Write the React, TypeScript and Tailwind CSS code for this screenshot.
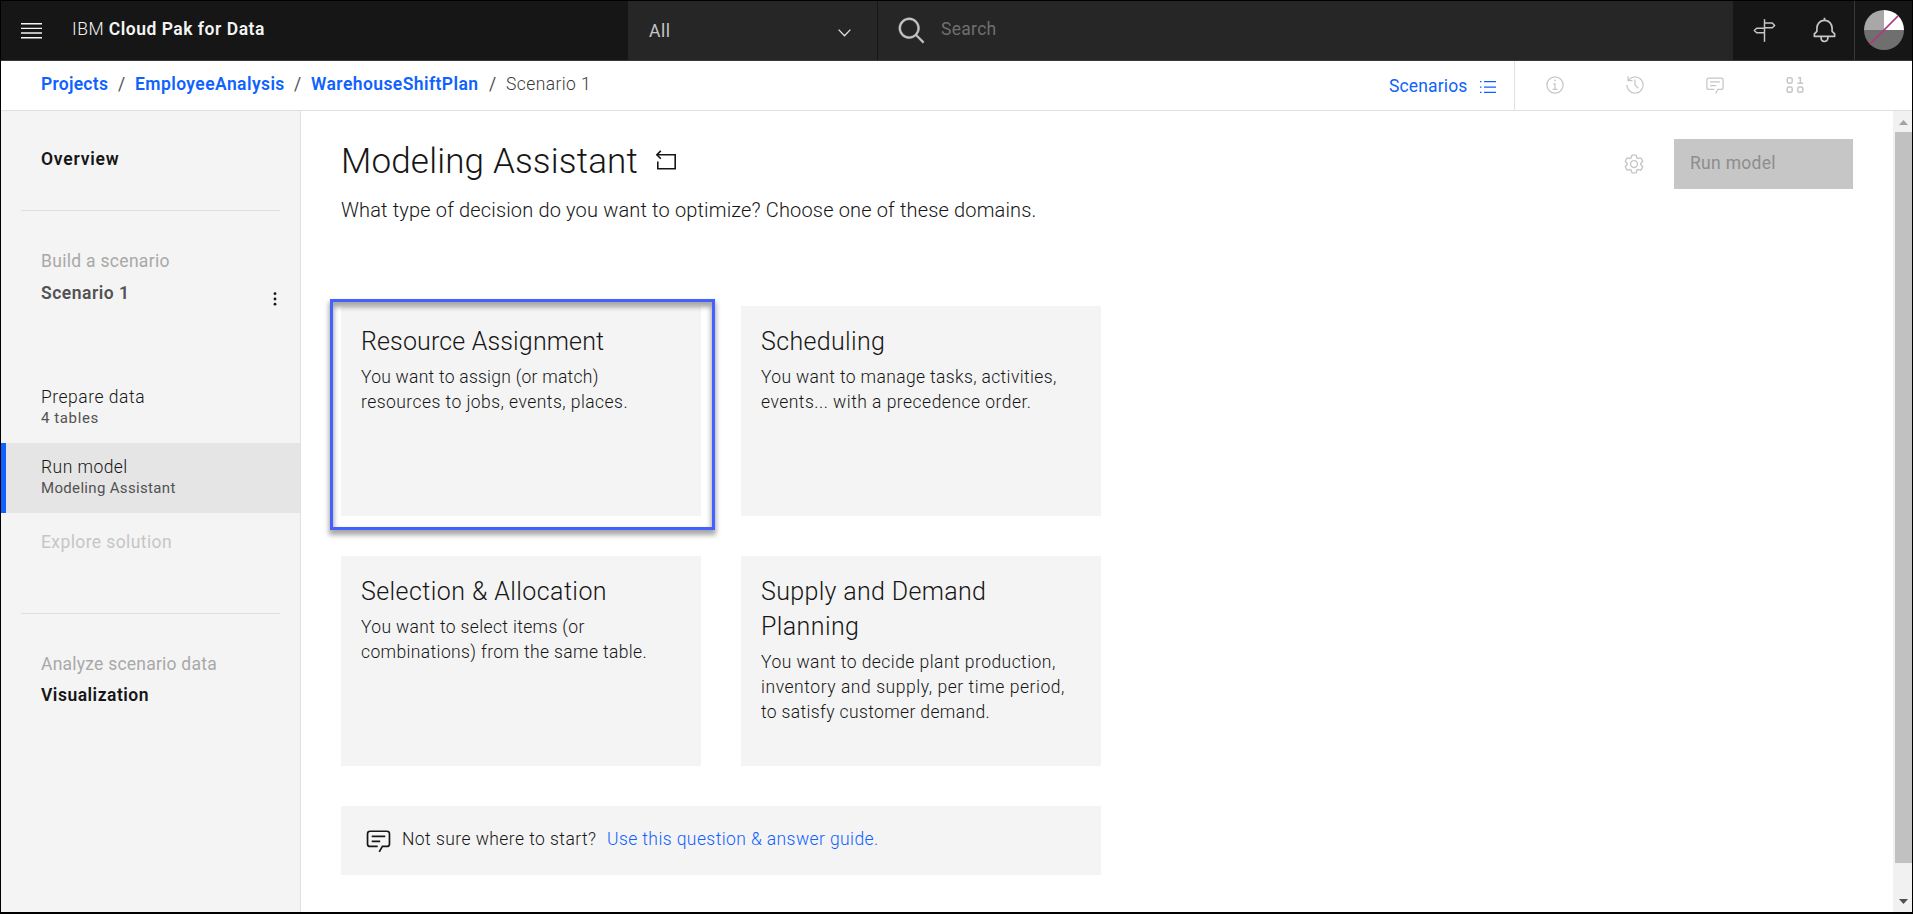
import React from "react";
import type { ReactNode } from "react";

type IconProps = { className?: string; children: ReactNode; box?: number };

function Icon({ className = "", children, box = 32 }: IconProps) {
  return (
    <svg viewBox={`0 0 ${box} ${box}`} fill="currentColor" className={`block shrink-0 ${className}`} aria-hidden="true">
      {children}
    </svg>
  );
}

const SearchIcon = ({ className }: { className: string }) => (
  <Icon className={className}>
    <path d="M29,27.5859l-7.5521-7.5521a11.0177,11.0177,0,1,0-1.4141,1.4141L27.5859,29ZM4,13a9,9,0,1,1,9,9A9.01,9.01,0,0,1,4,13Z" stroke="currentColor" strokeWidth="0.5" />
  </Icon>
);

const SignpostIcon = ({ className }: { className: string }) => (
  <Icon className={className}>
    <g fill="none" stroke="currentColor" strokeWidth="1.9" strokeLinejoin="round">
      <path d="M16 1.500V30.500" />
      <path d="M16 6.500H26L29 9.500L26 12.500H16" />
      <path d="M16 13H6L3 16L6 19H16" />
    </g>
  </Icon>
);

const BellIcon = ({ className }: { className: string }) => (
  <Icon className={className}>
    <path d="M28.7071,19.293,26,16.5859V13a10.0136,10.0136,0,0,0-9-9.9492V1H15V3.0508A10.0136,10.0136,0,0,0,6,13v3.5859L3.2929,19.293A1,1,0,0,0,3,20v3a1,1,0,0,0,1,1h7v.7768a5.152,5.152,0,0,0,4.5,5.1987A5.0057,5.0057,0,0,0,21,25V24h7a1,1,0,0,0,1-1V20A1,1,0,0,0,28.7071,19.293ZM19,25a3,3,0,0,1-6,0V24h6Zm8-3H5V20.4141L7.707,17.707A1,1,0,0,0,8,17V13a8,8,0,0,1,16,0v4a1,1,0,0,0,.293.707L27,20.4141Z" />
  </Icon>
);

const InfoIcon = ({ className }: { className: string }) => (
  <Icon className={className}>
    <path d="M17 22V13H13V15H15V22H12V24H20V22ZM16 7a1.500 1.500 0 1 0 1.500 1.500A1.500 1.500 0 0 0 16 7Z" />
    <path d="M16,30A14,14,0,1,1,30,16,14,14,0,0,1,16,30ZM16,4A12,12,0,1,0,28,16,12,12,0,0,0,16,4Z" />
  </Icon>
);

const HistoryIcon = ({ className }: { className: string }) => (
  <Icon className={className}>
    <path d="M20.59 22 15 16.410 15 7 17 7 17 15.580 22 20.590 20.590 22Z" />
    <path d="M16,2A13.940,13.940,0,0,0,6,6.230V2H4v8h8V8H7.080A12,12,0,1,1,4,16H2A14,14,0,1,0,16,2Z" />
  </Icon>
);

const ChatIcon = ({ className }: { className: string }) => (
  <Icon className={className}>
    <path d="M17.740,30,16,29l4-7h6a2,2,0,0,0,2-2V8a2,2,0,0,0-2-2H6A2,2,0,0,0,4,8V20a2,2,0,0,0,2,2h9v2H6a4,4,0,0,1-4-4V8A4,4,0,0,1,6,4H26a4,4,0,0,1,4,4V20a4,4,0,0,1-4,4H21.160Z" />
    <path d="M8 10H24V12H8ZM8 16H18V18H8Z" />
  </Icon>
);

const DataIcon = ({ className }: { className: string }) => (
  <Icon className={className}>
    <g fill="none" stroke="currentColor" strokeWidth="2.400">
      <rect x="3.500" y="4.500" width="8" height="8.500" rx="2.500" />
      <rect x="3.500" y="19" width="8" height="8.500" rx="2.500" />
      <rect x="20.500" y="19" width="8" height="8.500" rx="2.500" />
      <path d="M20 13.300H29M24.600 13.500V4.500H21" />
    </g>
  </Icon>
);

const GearIcon = ({ className }: { className: string }) => (
  <Icon className={className}>
    <path d="M27 16.760c0-.250 0-.500 0-.760s0-.510 0-.770l1.920-1.680A2 2 0 0 0 29.300 11L26.940 7a2 2 0 0 0-1.730-1 2 2 0 0 0-.640.100l-2.430.820a11.350 11.350 0 0 0-1.310-.750l-.510-2.520a2 2 0 0 0-2-1.610h-4.680a2 2 0 0 0-2 1.610l-.510 2.520a11.480 11.480 0 0 0-1.320.750L7.430 6.060A2 2 0 0 0 6.790 6a2 2 0 0 0-1.730 1L2.700 11a2 2 0 0 0 .410 2.510L5 15.240c0 .250 0 .500 0 .760s0 .510 0 .770l-1.890 1.680A2 2 0 0 0 2.700 21l2.360 4a2 2 0 0 0 1.730 1 2 2 0 0 0 .640-.100l2.430-.820a11.350 11.350 0 0 0 1.310.750l.510 2.520a2 2 0 0 0 2 1.610h4.720a2 2 0 0 0 2-1.610l.510-2.520a11.480 11.480 0 0 0 1.320-.750l2.420.820a2 2 0 0 0 .640.100 2 2 0 0 0 1.730-1l2.280-4a2 2 0 0 0-.410-2.510ZM25.210 24l-3.430-1.160a8.860 8.860 0 0 1-2.710 1.570L18.360 28h-4.720l-.710-3.550a9.360 9.360 0 0 1-2.700-1.570L6.790 24l-2.360-4 2.720-2.400a8.900 8.900 0 0 1 0-3.130L4.430 12l2.360-4 3.430 1.160a8.860 8.860 0 0 1 2.710-1.570L13.640 4h4.720l.710 3.550a9.360 9.360 0 0 1 2.700 1.570L25.210 8l2.360 4-2.720 2.400a8.900 8.900 0 0 1 0 3.130L27.570 20Z" />
    <path d="M16 22a6 6 0 1 1 6-6 5.940 5.940 0 0 1-6 6Zm0-10a3.910 3.910 0 0 0-4 4 3.910 3.910 0 0 0 4 4 3.910 3.910 0 0 0 4-4 3.910 3.910 0 0 0-4-4Z" />
  </Icon>
);

function TopBar() {
  return (
    <header className="flex h-[60px] shrink-0 items-stretch border-b border-[#393939] bg-[#161616] text-[17.5px] leading-6">
      <div className="flex w-[627px] items-start">
        <svg viewBox="0 0 21 16" className="mt-[22px] ml-5 h-4 w-[21px] fill-[#f4f4f4]" aria-hidden="true">
          <path d="M0 0H21V1.400H0ZM0 4.700H21V6.100H0ZM0 9.300H21V10.700H0ZM0 14H21V15.400H0Z" />
        </svg>
        <div className="mt-4 ml-[30px] whitespace-nowrap text-[#f4f4f4]">
          <span className="font-light tracking-[0.6px]">IBM</span>{" "}
          <span className="font-semibold tracking-[0.52px]">Cloud Pak for Data</span>
        </div>
      </div>
      <div className="flex w-[250px] items-start border-r border-[#161616] bg-[#262626] text-[#c6c6c6]">
        <span className="mt-[18px] ml-[21px] w-[189px] tracking-[0.5px]">All</span>
        <svg viewBox="0 0 13 8" className="mt-[28px] h-2 w-[13px] fill-none stroke-[#e0e0e0] stroke-[1.3]" aria-hidden="true">
          <path d="M0.600 0.600L6.500 6.700L12.400 0.600" />
        </svg>
      </div>
      <div className="flex flex-1 items-start bg-[#262626] text-[#6f6f6f]">
        <SearchIcon className="mt-[15px] ml-[19px] size-[30px] text-[#c6c6c6]" />
        <span className="mt-4 ml-[14px] tracking-[0.3px]">Search</span>
      </div>
      <div className="flex w-[121px] items-start text-[#c6c6c6]">
        <SignpostIcon className="mt-[17px] ml-[19px] size-[25px]" />
        <BellIcon className="mt-4 ml-[34px] size-[27px]" />
      </div>
      <div className="flex w-[58px] items-start border-l border-[#393939]">
        <svg viewBox="0 0 40 40" className="mt-[9px] ml-[9px] size-10" aria-hidden="true">
          <path d="M20 20V0A20 20 0 0 0 0 20Z" fill="#a8a8a8" />
          <path d="M20 20V0A20 20 0 0 1 40 20Z" fill="#ffffff" />
          <path d="M0 20H40A20 20 0 0 1 0 20Z" fill="#6f6f6f" />
          <path d="M5.900 34.100L34.100 5.900" stroke="#b5387a" strokeWidth="1.600" />
        </svg>
      </div>
    </header>
  );
}

function BreadcrumbBar() {
  return (
    <div className="flex h-[50px] shrink-0 border-b border-[#e0e0e0] bg-white text-[17.5px] leading-6">
      <nav className="flex flex-1 items-start pt-[11px] pl-10 whitespace-nowrap text-[#525252]">
        <a className="w-[77px] font-semibold tracking-[0.26px] text-[#0f62fe]">Projects</a>
        <span className="w-[17px]">/</span>
        <a className="w-[159px] font-semibold tracking-[0.42px] text-[#0f62fe]">EmployeeAnalysis</a>
        <span className="w-[17px]">/</span>
        <a className="w-[178px] font-semibold tracking-[0.42px] text-[#0f62fe]">WarehouseShiftPlan</a>
        <span className="w-[17px]">/</span>
        <span className="font-light tracking-[0.4px] text-[#393939]">Scenario 1</span>
      </nav>
      <div className="flex w-[126px] items-start border-r border-[#e0e0e0] text-[#0f62fe]">
        <span className="mt-[13px] w-[91px] tracking-[0.14px]">Scenarios</span>
        <svg viewBox="0 0 16 14" className="mt-[19px] h-[14px] w-4 fill-current" aria-hidden="true">
          <path d="M4 1H16V2.300H4ZM4 6.400H16V7.700H4ZM4 11.800H16V13.100H4ZM0 1H1.500V2.300H0ZM0 6.400H1.500V7.700H0ZM0 11.800H1.500V13.100H0Z" />
        </svg>
      </div>
      <div className="flex w-[397px] items-start gap-[60px] pt-[14px] pl-[30px] text-[#c6c6c6]">
        <InfoIcon className="size-5" />
        <HistoryIcon className="size-5" />
        <ChatIcon className="size-5" />
        <DataIcon className="size-5" />
      </div>
    </div>
  );
}

function SideNav() {
  return (
    <aside className="flex w-[300px] shrink-0 flex-col border-r border-[#e0e0e0] bg-[#f4f4f4] text-[17.5px] leading-6 text-[#161616]">
      <div className="h-[99px] pt-9 pl-10 font-semibold tracking-[0.78px]">Overview</div>
      <hr className="mx-5 w-[259px] border-[#e0e0e0]" />
      <div className="mt-[38px] pl-10 tracking-[0.3px] text-[#a8a8a8]">Build a scenario</div>
      <div className="mt-2 flex h-6 items-start pl-10 text-[#525252]">
        <span className="w-[232px] font-semibold tracking-[0.5px]">Scenario 1</span>
        <svg viewBox="0 0 4 14" className="mt-[11px] h-[14px] w-1 fill-[#161616]" aria-hidden="true">
          <circle cx="2" cy="1.700" r="1.400" />
          <circle cx="2" cy="7" r="1.400" />
          <circle cx="2" cy="12.200" r="1.400" />
        </svg>
      </div>
      <div className="mt-[68px] h-[70px] pt-3 pl-10">
        <div className="font-light tracking-[0.52px]">Prepare data</div>
        <div className="-mt-[1px] text-[15px] leading-5 tracking-[0.6px] text-[#525252]">4 tables</div>
      </div>
      <div className="h-[70px] border-l-[5px] border-[#0f62fe] bg-[#e5e5e5] pt-3 pl-[35px]">
        <div className="font-light tracking-[0.45px]">Run model</div>
        <div className="-mt-[1px] text-[15px] leading-5 tracking-[0.33px] text-[#525252]">Modeling Assistant</div>
      </div>
      <div className="mt-[17px] pl-10 tracking-[0.4px] text-[#c6c6c6]">Explore solution</div>
      <hr className="mx-5 mt-[59px] w-[259px] border-[#e0e0e0]" />
      <div className="mt-[38px] pl-10 tracking-[0.23px] text-[#a8a8a8]">Analyze scenario data</div>
      <div className="mt-[7px] pl-10 font-semibold tracking-[0.5px]">Visualization</div>
    </aside>
  );
}

type Line = { text: string; tracking: string };
type Domain = { title: Line[]; lines: Line[]; highlighted?: boolean };

const domains: Domain[] = [
  {
    title: [{ text: "Resource Assignment", tracking: "tracking-[0.15px]" }],
    lines: [
      { text: "You want to assign (or match)", tracking: "tracking-[0.25px]" },
      { text: "resources to jobs, events, places.", tracking: "tracking-[0.45px]" },
    ],
    highlighted: true,
  },
  {
    title: [{ text: "Scheduling", tracking: "tracking-[0.35px]" }],
    lines: [
      { text: "You want to manage tasks, activities,", tracking: "tracking-[0.36px]" },
      { text: "events... with a precedence order.", tracking: "tracking-[0.48px]" },
    ],
  },
  {
    title: [{ text: "Selection & Allocation", tracking: "tracking-[0.42px]" }],
    lines: [
      { text: "You want to select items (or", tracking: "tracking-[0.36px]" },
      { text: "combinations) from the same table.", tracking: "tracking-[0.37px]" },
    ],
  },
  {
    title: [
      { text: "Supply and Demand", tracking: "tracking-[0.34px]" },
      { text: "Planning", tracking: "tracking-[0.4px]" },
    ],
    lines: [
      { text: "You want to decide plant production,", tracking: "tracking-[0.45px]" },
      { text: "inventory and supply, per time period,", tracking: "tracking-[0.55px]" },
      { text: "to satisfy customer demand.", tracking: "tracking-[0.36px]" },
    ],
  },
];

function DomainCard({ title, lines, highlighted }: Domain) {
  return (
    <section className="relative h-[210px] w-[360px] bg-[#f4f4f4] pt-[18px] pl-5 whitespace-nowrap">
      <h2 className="text-[25px] leading-[35px] font-light text-[#161616]">
        {title.map((line) => (
          <span key={line.text} className={`block ${line.tracking}`}>{line.text}</span>
        ))}
      </h2>
      <p className="mt-[6px] text-[17.5px] leading-[25px] font-light text-[#161616]">
        {lines.map((line) => (
          <span key={line.text} className={`block ${line.tracking}`}>{line.text}</span>
        ))}
      </p>
      {highlighted && (
        <div className="absolute -top-[7px] -left-[11px] h-[231px] w-[385px] border-[3px] border-[#4460ff] shadow-[0_4px_5px_1px_rgba(0,0,0,0.35),inset_0_4px_5px_1px_rgba(0,0,0,0.35)]" />
      )}
    </section>
  );
}

function Main() {
  return (
    <main className="flex min-w-0 flex-1 flex-col bg-white pl-10">
      <div className="flex h-[195px] items-start">
        <div className="flex-1">
          <div className="flex h-[51px] items-start pt-[28px]">
            <h1 className="w-[315px] text-[35px] leading-[45px] font-light tracking-[0.17px] whitespace-nowrap text-[#161616]">Modeling Assistant</h1>
            <svg viewBox="0 0 20 20" className="mt-[11px] size-5 fill-none stroke-[#161616] stroke-[1.6]" aria-hidden="true">
              <path d="M0.800 4.800H19.200V18.800H1.800V11.500" />
              <path d="M4.800 0.900L0.900 4.800L4.800 8.700" />
            </svg>
          </div>
          <p className="mt-[35px] text-[20px] leading-[26px] font-light tracking-[0.16px] whitespace-nowrap text-[#161616]">
            What type of decision do you want to optimize? Choose one of these domains.
          </p>
        </div>
        <GearIcon className="mt-[42px] size-[22px] text-[#c6c6c6]" />
        <button className="mt-7 mr-10 ml-[29px] h-[50px] w-[179px] bg-[#c6c6c6] pb-0.5 pl-4 text-left text-[17.5px] leading-6 tracking-[0.3px] text-[#8d8d8d]">
          Run model
        </button>
      </div>
      <div className="grid w-[760px] grid-cols-[360px_360px] gap-10">
        {domains.map((domain) => (
          <DomainCard key={domain.title[0].text} {...domain} />
        ))}
      </div>
      <div className="mt-10 flex h-[69px] w-[760px] items-start bg-[#f4f4f4] pl-6 text-[17.5px] leading-6 font-light whitespace-nowrap text-[#161616]">
        <ChatIcon className="mt-[21px] size-[27px]" />
        <span className="mt-[21px] ml-[10px] w-[205px] tracking-[0.44px]">Not sure where to start?</span>
        <a className="mt-[21px] tracking-[0.41px] text-[#0f62fe]">Use this question &amp; answer guide.</a>
      </div>
    </main>
  );
}

function Scrollbar() {
  return (
    <div className="flex w-[19px] shrink-0 flex-col items-center bg-[#f1f1f1]">
      <svg viewBox="0 0 19 21" className="h-[21px] w-[19px] fill-[#a3a3a3]" aria-hidden="true">
        <path d="M6 14L10.500 9L15 14Z" />
      </svg>
      <div className="ml-0.5 h-[731px] w-[17px] bg-[#c1c1c1]" />
      <svg viewBox="0 0 19 48" className="h-12 w-[19px] fill-[#505050]" aria-hidden="true">
        <path d="M6 36L10.500 41L15 36Z" />
      </svg>
    </div>
  );
}

export default function App() {
  return (
    <div className="flex h-[914px] w-[1913px] flex-col overflow-hidden border border-b-2 border-black bg-white font-['Roboto',sans-serif]">
      <TopBar />
      <BreadcrumbBar />
      <div className="flex min-h-0 flex-1">
        <SideNav />
        <Main />
        <Scrollbar />
      </div>
    </div>
  );
}
